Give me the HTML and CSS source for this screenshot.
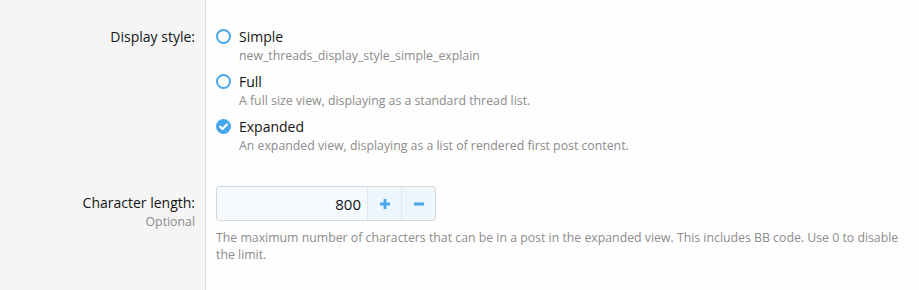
FILE: index.html
```html
<!DOCTYPE html>
<html lang="en">
<head>
    <meta charset="UTF-8">
    <title>Thread list options</title>
    <link rel="stylesheet" href="styles.css">
</head>
<body>
    <div class="form">
        <div class="form-row">
            <div class="row-label">Display style:</div>
            <div class="row-input">
                <ul class="choices">
                    <li class="choice">
                        <span class="radio"></span>
                        <div>
                            <div class="choice-label">Simple</div>
                            <div class="hint">new_threads_display_style_simple_explain</div>
                        </div>
                    </li>
                    <li class="choice">
                        <span class="radio"></span>
                        <div>
                            <div class="choice-label">Full</div>
                            <div class="hint">A full size view, displaying as a standard thread list.</div>
                        </div>
                    </li>
                    <li class="choice">
                        <span class="radio checked">
                            <svg viewBox="0 0 16 16" width="16" height="16"><circle cx="8" cy="8" r="8" fill="#47a7eb"/><path d="M4.4 8.3l2.5 2.4 4.8-5" fill="none" stroke="#fff" stroke-width="2.2" stroke-linecap="round" stroke-linejoin="round"/></svg>
                        </span>
                        <div>
                            <div class="choice-label">Expanded</div>
                            <div class="hint">An expanded view, displaying as a list of rendered first post content.</div>
                        </div>
                    </li>
                </ul>
            </div>
        </div>
        <div class="form-row last">
            <div class="row-label">
                Character length:
                <div class="optional">Optional</div>
            </div>
            <div class="row-input">
                <div class="number-box">
                    <input class="number-input" type="text" value="800">
                    <button class="number-btn">
                        <svg viewBox="0 0 12 12" width="12" height="12"><path d="M6 1v10M1 6h10" stroke="#47a7eb" stroke-width="2.8"/></svg>
                    </button>
                    <button class="number-btn">
                        <svg viewBox="0 0 12 12" width="12" height="12"><path d="M1 6h10" stroke="#47a7eb" stroke-width="2.8"/></svg>
                    </button>
                </div>
                <div class="hint explain">The maximum number of characters that can be in a post in the expanded view. This includes BB code. Use 0 to disable the limit.</div>
            </div>
        </div>
    </div>
</body>
</html>
```

FILE: styles.css
```css
html, body { height: 100%; }
body { margin: 0; font-family: "Open Sans", sans-serif; font-size: 14px; color: #141414; background: #fefefe; }
.form { display: flex; flex-direction: column; min-height: 100%; }
.form-row { display: flex; }
.form-row.last { flex-grow: 1; }
.row-label { width: 195px; padding-right: 10px; text-align: right; background: #f5f5f5; border-right: 1px solid #dfdfdf; padding-top: 27px; line-height: 20px; }
.row-input { flex: 1; padding: 27px 10px 0 10px; }
.form-row.last .row-label { padding-top: 31px; }
.form-row.last .row-input { padding-top: 24px; }
.choices { list-style: none; margin: 0; padding: 0; }
.choice { display: flex; gap: 8px; margin-bottom: 7px; }
.choice-label { line-height: 20px; }
.radio { width: 11px; height: 11px; border: 2px solid #47a7eb; border-radius: 50%; margin-top: 2px; flex-shrink: 0; background: #fff; }
.radio.checked { width: 15px; height: 15px; border: none; }
.radio.checked svg { display: block; width: 15px; height: 15px; }
.hint { font-size: 12.3px; color: #8c8c8c; line-height: 18px; }
.optional { font-size: 12.3px; color: #8c8c8c; line-height: 18px; }
.number-box { display: flex; width: 218px; height: 33px; border: 1px solid #d8d8d8; border-radius: 3px; overflow: hidden; }
.number-input { flex: 1; min-width: 0; border: none; background: #f5faff; text-align: right; padding: 0 6px; font: 15px "Open Sans", sans-serif; color: #141414; }
.number-btn { width: 34px; border: none; border-left: 1px solid #dfe6ee; background: #edf5fd; display: flex; align-items: center; justify-content: center; padding: 0; }
.explain { margin-top: 8px; line-height: 17px; }
```
